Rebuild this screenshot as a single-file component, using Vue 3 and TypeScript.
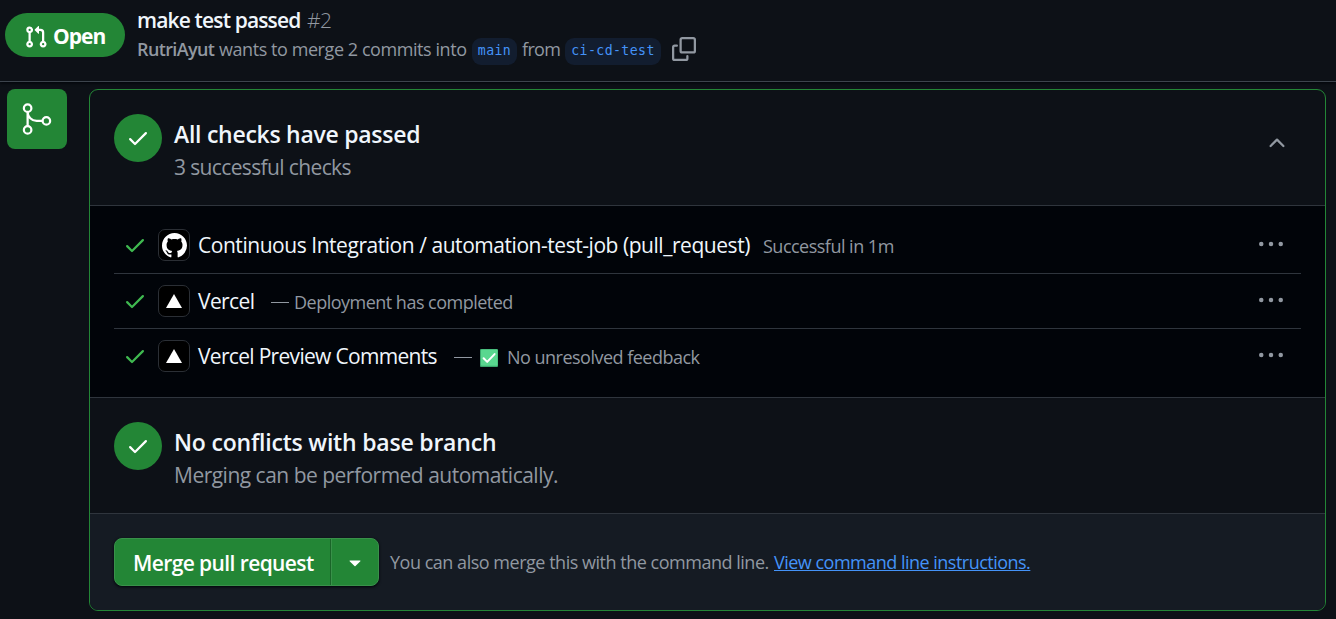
<script setup lang="ts">
interface CheckRow {
  id: string
  kind: 'github' | 'vercel'
  name: string
  note: string
  dash: boolean
  emoji: boolean
}

const rows: CheckRow[] = [
  { id: 'ci', kind: 'github', name: 'Continuous Integration / automation-test-job (pull_request)', note: 'Successful in 1m', dash: false, emoji: false },
  { id: 'vercel', kind: 'vercel', name: 'Vercel', note: 'Deployment has completed', dash: true, emoji: false },
  { id: 'preview', kind: 'vercel', name: 'Vercel Preview Comments', note: 'No unresolved feedback', dash: true, emoji: true },
]

const checkPath =
  'M13.78 4.22a.75.75 0 0 1 0 1.06l-7.25 7.25a.75.75 0 0 1-1.06 0L2.22 9.28a.751.751 0 0 1 .018-1.042.751.751 0 0 1 1.042-.018L6 10.94l6.72-6.72a.75.75 0 0 1 1.06 0Z'
</script>

<template>
  <div class="page">
    <header class="head">
      <span class="state">
        <svg class="icon" viewBox="0 0 16 16"><path d="M1.5 3.25a2.25 2.25 0 1 1 3 2.122v5.256a2.251 2.251 0 1 1-1.5 0V5.372A2.25 2.25 0 0 1 1.5 3.25Zm5.677-.177L9.573.677A.25.25 0 0 1 10 .854V2.5h1A2.5 2.5 0 0 1 13.5 5v5.628a2.251 2.251 0 1 1-1.5 0V5a1 1 0 0 0-1-1h-1v1.646a.25.25 0 0 1-.427.177L7.177 3.427a.25.25 0 0 1 0-.354ZM3.75 2.5a.75.75 0 1 0 0 1.5.75.75 0 0 0 0-1.5Zm0 9.5a.75.75 0 1 0 0 1.5.75.75 0 0 0 0-1.5Zm8.25.75a.75.75 0 1 0 1.5 0 .75.75 0 0 0-1.5 0Z" /></svg>
        <span class="state-text">Open</span>
      </span>
      <div class="head-text">
        <div class="title-line">
          <span class="title">make test passed</span>
          <span class="number">#2</span>
        </div>
        <div class="meta">
          <span class="author">RutriAyut</span>
          <span class="meta-text">wants to merge 2 commits into</span>
          <span class="branch base">main</span>
          <span class="from">from</span>
          <span class="branch compare">ci-cd-test</span>
          <svg class="icon copy" viewBox="0 0 16 16"><path d="M0 6.75C0 5.784.784 5 1.75 5h1.5a.75.75 0 0 1 0 1.5h-1.5a.25.25 0 0 0-.25.25v7.5c0 .138.112.25.25.25h7.5a.25.25 0 0 0 .25-.25v-1.5a.75.75 0 0 1 1.5 0v1.5A1.75 1.75 0 0 1 9.25 16h-7.5A1.75 1.75 0 0 1 0 14.25Z" /><path d="M5 1.75C5 .784 5.784 0 6.75 0h7.5C15.216 0 16 .784 16 1.75v7.5A1.75 1.75 0 0 1 14.25 11h-7.5A1.75 1.75 0 0 1 5 9.25Zm1.75-.25a.25.25 0 0 0-.25.25v7.5c0 .138.112.25.25.25h7.5a.25.25 0 0 0 .25-.25v-7.5a.25.25 0 0 0-.25-.25Z" /></svg>
        </div>
      </div>
    </header>

    <main class="body">
      <div class="merge-badge">
        <svg viewBox="0 0 24 24" fill="none" stroke="#fff" stroke-width="1.5">
          <circle cx="5.75" cy="4.75" r="2.5" />
          <circle cx="5.75" cy="19.25" r="2.5" />
          <circle cx="18.25" cy="13.25" r="2.5" />
          <path d="M5.75 7.25v9.5M5.75 7.25a6 6 0 0 0 6 6h4" />
        </svg>
      </div>

      <section class="box">
        <div class="summary">
          <span class="disc"><svg class="icon" viewBox="0 0 16 16"><path :d="checkPath" /></svg></span>
          <div class="summary-text">
            <h3 class="h-checks">All checks have passed</h3>
            <p class="p-checks">3 successful checks</p>
          </div>
          <svg class="icon chevron" viewBox="0 0 16 16"><path d="M3.22 10.53a.749.749 0 0 1 0-1.06l4.25-4.25a.749.749 0 0 1 1.06 0l4.25 4.25a.749.749 0 1 1-1.06 1.06L8 6.811 4.28 10.53a.749.749 0 0 1-1.06 0Z" /></svg>
        </div>

        <div class="checks">
          <div v-for="row in rows" :key="row.id" class="row" :class="row.id">
            <svg class="icon tick" viewBox="0 0 16 16"><path :d="checkPath" /></svg>
            <span class="avatar">
              <svg v-if="row.kind === 'github'" class="octocat" viewBox="0 0 16 16"><path d="M8 0C3.58 0 0 3.58 0 8c0 3.54 2.29 6.53 5.47 7.59.4.07.55-.17.55-.38 0-.19-.01-.82-.01-1.49-2.01.37-2.53-.49-2.69-.94-.09-.23-.48-.94-.82-1.13-.28-.15-.68-.52-.01-.53.63-.01 1.08.58 1.23.82.72 1.21 1.87.87 2.33.66.07-.52.28-.87.51-1.07-1.78-.2-3.64-.89-3.64-3.95 0-.87.31-1.59.82-2.15-.08-.2-.36-1.02.08-2.12 0 0 .67-.21 2.2.82.64-.18 1.32-.27 2-.27.68 0 1.36.09 2 .27 1.53-1.04 2.2-.82 2.2-.82.44 1.1.16 1.92.08 2.12.51.56.82 1.27.82 2.15 0 3.07-1.87 3.75-3.65 3.95.29.25.54.73.54 1.48 0 1.07-.01 1.93-.01 2.2 0 .21.15.46.55.38A8.013 8.013 0 0 0 16 8c0-4.42-3.58-8-8-8z" /></svg>
              <svg v-else class="triangle" viewBox="0 0 16 14"><path d="M8 0l8 14H0z" /></svg>
            </span>
            <span class="name">{{ row.name }}</span>
            <span v-if="row.dash" class="dash"></span>
            <svg v-if="row.emoji" class="emoji" viewBox="0 0 18 18">
              <rect width="18" height="18" rx="1" fill="#3aa76d" />
              <rect x="1" y="0.6" width="16.6" height="16.2" rx="0.8" fill="#59d78f" />
              <path d="M3.6 9.3l3.6 3.6 7.4-7.8" fill="none" stroke="#fff" stroke-width="2" stroke-linecap="round" stroke-linejoin="round" />
            </svg>
            <span class="note">{{ row.note }}</span>
            <svg class="icon kebab" viewBox="0 0 16 16"><circle cx="1.5" cy="8" r="1.5" /><circle cx="8" cy="8" r="1.5" /><circle cx="14.5" cy="8" r="1.5" /></svg>
          </div>
        </div>

        <div class="summary conflicts">
          <span class="disc"><svg class="icon" viewBox="0 0 16 16"><path :d="checkPath" /></svg></span>
          <div class="summary-text">
            <h3 class="h-conflicts">No conflicts with base branch</h3>
            <p class="p-conflicts">Merging can be performed automatically.</p>
          </div>
        </div>

        <div class="actions">
          <div class="split">
            <button class="merge" type="button"><span>Merge pull request</span></button>
            <button class="more" type="button" aria-label="Select merge method">
              <svg class="icon" viewBox="0 0 16 16"><path d="m4.427 7.427 3.396 3.396a.25.25 0 0 0 .354 0l3.396-3.396A.25.25 0 0 0 11.396 7H4.604a.25.25 0 0 0-.177.427Z" /></svg>
            </button>
          </div>
          <span class="hint">You can also merge this with the command line.</span>
          <a class="link">View command line instructions.</a>
        </div>
      </section>
    </main>
  </div>
</template>

<style>
body {
  margin: 0;
  background: #0d1117;
}
</style>

<style scoped>
.page {
  width: 1336px;
  height: 619px;
  overflow: hidden;
  background: #0d1117;
  color: #f0f6fc;
  font-family: 'Open Sans', 'Noto Sans', sans-serif;
  white-space: nowrap;
}
.icon {
  width: 24px;
  height: 24px;
  flex: none;
  fill: currentColor;
}
.head {
  box-sizing: border-box;
  height: 82px;
  padding: 7px 0 0 5px;
  display: flex;
  align-items: flex-start;
  border-bottom: 1px solid #3d444d;
  box-shadow: 0 1px 3px #010409;
}
.state {
  box-sizing: border-box;
  width: 120px;
  height: 44px;
  margin-top: 6px;
  padding: 3px 0 0 19px;
  display: flex;
  align-items: center;
  gap: 5px;
  border-radius: 22px;
  background: #238636;
  color: #fff;
}
.state-text {
  font-size: 21px;
  font-weight: 700;
  letter-spacing: -1px;
  line-height: 41px;
}
.head-text {
  margin-left: 12px;
}
.title-line {
  height: 28px;
  display: flex;
  gap: 7px;
  font-size: 21px;
  line-height: 26px;
}
.title {
  width: 163px;
  font-weight: 600;
  letter-spacing: -0.85px;
}
.number {
  color: #9198a1;
  font-weight: 300;
  letter-spacing: -0.6px;
}
.meta {
  height: 32px;
  display: flex;
  align-items: center;
  color: #9198a1;
  font-size: 18px;
  letter-spacing: -0.43px;
  line-height: 28px;
}
.author,
.meta-text,
.from {
  margin-top: -4px;
}
.author {
  width: 82px;
  font-weight: 600;
  letter-spacing: -0.62px;
}
.meta-text {
  width: 253px;
}
.branch {
  box-sizing: border-box;
  height: 27px;
  border-radius: 9px;
  background: #121d2f;
  color: #4493f8;
  font: 13.2px/26px 'DejaVu Sans Mono', monospace;
  letter-spacing: 0.42px;
  text-align: center;
}
.base {
  width: 45px;
}
.from {
  width: 43px;
  padding-left: 5px;
  letter-spacing: -0.65px;
}
.compare {
  width: 96px;
}
.copy {
  margin-left: 11px;
  margin-top: -4px;
}
.body {
  display: flex;
  padding: 7px 0 0 7px;
}
.merge-badge {
  width: 60px;
  height: 60px;
  display: grid;
  place-items: center;
  border-radius: 8px;
  background: #238636;
}
.merge-badge svg {
  width: 36px;
  height: 36px;
}
.box {
  box-sizing: border-box;
  width: 1237px;
  height: 522px;
  margin-left: 22px;
  border: 1px solid #238636;
  border-radius: 9px;
  overflow: hidden;
}
.summary {
  box-sizing: border-box;
  height: 116px;
  padding: 24px 36px 0 24px;
  display: flex;
  border-bottom: 1px solid #2f353d;
}
.disc {
  width: 48px;
  height: 48px;
  display: grid;
  place-items: center;
  border-radius: 50%;
  background: #238636;
  color: #fff;
}
.summary-text {
  margin-left: 12px;
}
h3,
p {
  margin: 0;
}
h3 {
  height: 36px;
  font-size: 23px;
  font-weight: 600;
  line-height: 40px;
}
.h-checks {
  letter-spacing: -0.27px;
}
.h-conflicts {
  letter-spacing: -0.2px;
}
p {
  color: #9198a1;
  font-size: 21px;
  line-height: 34px;
}
.p-checks {
  letter-spacing: -0.63px;
}
.p-conflicts {
  letter-spacing: -0.51px;
}
.chevron {
  margin: 17px 0 0 auto;
  color: #9198a1;
}
.checks {
  box-sizing: border-box;
  height: 192px;
  padding: 11px 24px 0;
  background: #010409;
  border-bottom: 1px solid #2f353d;
}
.row {
  box-sizing: border-box;
  display: flex;
  align-items: center;
  height: 54px;
  padding: 0 18px 0 9px;
}
.ci {
  height: 57px;
  border-bottom: 1px solid #2f353d;
}
.vercel {
  height: 55px;
  border-bottom: 1px solid #2f353d;
}
.tick {
  color: #3fb950;
}
.avatar {
  box-sizing: border-box;
  width: 32px;
  height: 32px;
  flex: none;
  margin: 0 8px 0 11px;
  display: grid;
  place-items: center;
  border: 1px solid #2b2f35;
  border-radius: 7px;
  background: #000;
  fill: #fff;
}
.octocat {
  width: 25px;
  height: 25px;
}
.triangle {
  width: 16px;
  height: 14px;
}
.name {
  font-size: 21px;
  font-weight: 500;
  letter-spacing: -0.6px;
}
.ci .name {
  width: 565px;
  letter-spacing: -0.455px;
}
.vercel .name {
  width: 73px;
}
.preview .name {
  width: 256px;
  letter-spacing: -0.69px;
}
.dash {
  width: 18px;
  height: 1px;
  margin: 2px 5px 0 0;
  background: #9198a1;
}
.emoji {
  width: 18px;
  height: 18px;
  margin: 3px 9px 0 3px;
}
.note {
  margin-top: 1px;
  color: #9198a1;
  font-size: 18px;
  letter-spacing: -0.51px;
}
.kebab {
  margin: -2px 0 0 auto;
  color: #9198a1;
}
.actions {
  box-sizing: border-box;
  height: 97px;
  padding: 24px;
  display: flex;
  background: #151b23;
}
.split {
  box-sizing: border-box;
  width: 265px;
  height: 48px;
  display: flex;
  border: 1px solid #39914a;
  border-radius: 8px;
  background: #238636;
  box-shadow: 0 1px 3px #010409;
}
button {
  padding: 0;
  border: 0;
  background: none;
  color: #fff;
  font: 650 21px/48px 'Open Sans', 'Noto Sans', sans-serif;
  white-space: nowrap;
}
.merge {
  width: 216px;
  padding-left: 18px;
  box-sizing: border-box;
  text-align: left;
  letter-spacing: -0.6px;
  border-right: 1px solid #1a6529;
}
.more {
  flex: 1;
  display: grid;
  place-items: center;
  border-left: 1px solid #39914a;
}
.hint {
  width: 384px;
  margin-left: 11px;
  color: #9198a1;
  font-size: 18px;
  letter-spacing: -0.48px;
  line-height: 49px;
}
.link {
  color: #4493f8;
  font-size: 18px;
  letter-spacing: -0.51px;
  line-height: 49px;
  text-decoration: underline;
}
</style>
